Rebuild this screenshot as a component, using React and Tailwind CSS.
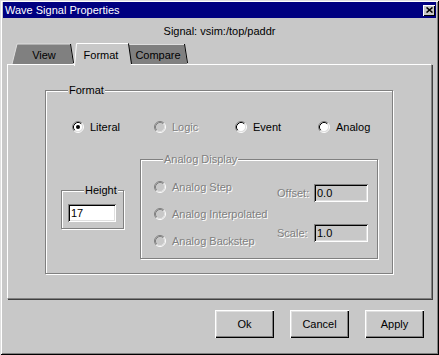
import React from 'react';

const font = { fontFamily: '"Liberation Sans", Arial, sans-serif' };

function Radio({ checked, disabled }) {
  return (
    <svg width="12" height="12" viewBox="0 0 12 12" className="shrink-0">
      <circle cx="6" cy="6" r="4.5" fill={disabled ? '#c8c8c8' : '#ffffff'} />
      <path d="M2.11 9.89 A5.5 5.5 0 0 1 9.89 2.11" fill="none" stroke="#808080" strokeWidth="1" />
      <path d="M9.89 2.11 A5.5 5.5 0 0 1 2.11 9.89" fill="none" stroke="#ffffff" strokeWidth="1" />
      <path d="M2.82 9.18 A4.5 4.5 0 0 1 9.18 2.82" fill="none" stroke={disabled ? '#808080' : '#000000'} strokeWidth="1" />
      <path d="M9.18 2.82 A4.5 4.5 0 0 1 2.82 9.18" fill="none" stroke="#dfdfdf" strokeWidth="1" />
      {checked && <circle cx="6" cy="6" r="2" fill="#000000" />}
    </svg>
  );
}

function Option({ label, checked, disabled, className = '' }) {
  return (
    <div className={`flex items-center gap-[6px] h-[16px] ${className}`}>
      <Radio checked={checked} disabled={disabled} />
      <span className={disabled ? 'text-[#808080] [text-shadow:1px_1px_0_#ffffff]' : 'text-black'}>{label}</span>
    </div>
  );
}

function Field({ value, disabled, className = '' }) {
  return (
    <div
      className={`h-[18px] flex items-center pl-[3px] ${disabled ? 'bg-[#c8c8c8]' : 'bg-white'} shadow-[inset_1px_1px_0_#808080,inset_-1px_-1px_0_#ffffff,inset_2px_2px_0_#000000,inset_-2px_-2px_0_#dfdfdf] ${className}`}
    >
      {value}
    </div>
  );
}

function GroupBox({ label, disabled, className = '', children }) {
  return (
    <div className={`relative border border-[#808080] shadow-[1px_1px_0_#ffffff,inset_1px_1px_0_#ffffff] ${className}`}>
      <span
        className={`absolute top-[-8px] left-[22px] px-[1px] bg-[#c8c8c8] leading-[14px] ${
          disabled ? 'text-[#808080] [text-shadow:1px_1px_0_#ffffff]' : 'text-black'
        }`}
      >
        {label}
      </span>
      {children}
    </div>
  );
}

function Button({ children }) {
  return (
    <button className="w-[59px] h-[28px] bg-[#c8c8c8] text-black shadow-[inset_1px_1px_0_#ffffff,inset_-1px_-1px_0_#000000,inset_-2px_-2px_0_#808080,inset_2px_2px_0_#dfdfdf]">
      {children}
    </button>
  );
}

function TabStrip() {
  return (
    <div className="relative z-10 h-[21px] w-[184px] ml-[4px]">
      <svg width="184" height="23" viewBox="0 0 184 23" className="absolute top-0 left-0">
        <polygon points="10,1 63,1 66,21 5,21" fill="#808080" />
        <polyline points="5,21 10,1 63,1" fill="none" stroke="#dfdfdf" strokeWidth="1" />
        <line x1="63.5" y1="1" x2="66.5" y2="20" stroke="#000000" strokeWidth="1" />

        <polygon points="122,1 177,1 180,21 124,21" fill="#808080" />
        <line x1="122" y1="1.5" x2="177" y2="1.5" stroke="#dfdfdf" strokeWidth="1" />
        <line x1="177.5" y1="1" x2="180.5" y2="20" stroke="#000000" strokeWidth="1" />

        <polygon points="69,0 121,0 124,23 67,23" fill="#c8c8c8" />
        <polyline points="67.5,23 69.5,0.5 121,0.5" fill="none" stroke="#ffffff" strokeWidth="1" />
        <line x1="121.5" y1="0.5" x2="124.5" y2="21" stroke="#000000" strokeWidth="1" />
      </svg>
      <div className="relative flex h-full pl-[5px] pt-[3px] items-center">
        <span className="w-[64px] text-center">View</span>
        <span className="w-[50px] text-center">Format</span>
        <span className="w-[64px] text-center">Compare</span>
      </div>
    </div>
  );
}

export default function App() {
  return (
    <div
      style={font}
      className="w-[439px] h-[355px] bg-[#c8c8c8] text-[11px] leading-[14px] text-black flex flex-col pt-[2px] px-[3px] shadow-[inset_1px_1px_0_#dfdfdf,inset_-1px_-1px_0_#000000,inset_2px_2px_0_#ffffff,inset_-2px_-2px_0_#808080]"
    >
      {/* title bar */}
      <div className="h-[16px] bg-[#000080] flex items-center justify-between pl-[2px] pr-[1px]">
        <span className="text-white">Wave Signal Properties</span>
        <div className="w-[12px] h-[11px] bg-[#c8c8c8] flex items-center justify-center shadow-[inset_1px_1px_0_#ffffff,inset_-1px_-1px_0_#000000]">
          <svg width="7" height="6" viewBox="0 0 7 6">
            <path d="M0.5 0.5 L6.5 5.5 M6.5 0.5 L0.5 5.5" stroke="#000" strokeWidth="1.6" />
          </svg>
        </div>
      </div>

      <div className="mt-[6px] h-[14px] text-center">Signal: vsim:/top/paddr</div>

      <div className="mt-[5px]">
        <TabStrip />
      </div>

      {/* tab panel */}
      <div className="ml-[4px] w-[425px] h-[235px] border-l border-t border-white border-r border-b border-r-[#808080] border-b-[#808080] shadow-[1px_1px_0_#404040]">
        <GroupBox label="Format" className="ml-[37px] mt-[25px] w-[348px] h-[184px]">
          <div className="flex pl-[26px] pt-[28px]">
            <Option label="Literal" checked className="w-[82px]" />
            <Option label="Logic" disabled className="w-[81px]" />
            <Option label="Event" className="w-[83px]" />
            <Option label="Analog" />
          </div>
          <div className="flex items-start pl-[15px] mt-[24px]">
            <GroupBox label="Height" className="mt-[31px] w-[63px] h-[39px]">
              <Field value="17" className="ml-[6px] mt-[13px] w-[48px]" />
            </GroupBox>
            <GroupBox label="Analog Display" disabled className="ml-[16px] w-[238px] h-[100px]">
              <div className="flex">
                <div className="w-[136px] pl-[13px] pt-[19px] flex flex-col gap-[11px]">
                  <Option label="Analog Step" disabled />
                  <Option label="Analog Interpolated" disabled />
                  <Option label="Analog Backstep" disabled />
                </div>
                <div className="pt-[24px] flex flex-col gap-[22px]">
                  <div className="flex items-center">
                    <span className="w-[37px] text-[#808080] [text-shadow:1px_1px_0_#ffffff]">Offset:</span>
                    <Field value="0.0" disabled className="w-[54px]" />
                  </div>
                  <div className="flex items-center">
                    <span className="w-[37px] text-[#808080] [text-shadow:1px_1px_0_#ffffff]">Scale:</span>
                    <Field value="1.0" disabled className="w-[54px]" />
                  </div>
                </div>
              </div>
            </GroupBox>
          </div>
        </GroupBox>
      </div>

      <div className="mt-[11px] flex justify-end gap-[16px] mr-[12px]">
        <Button>Ok</Button>
        <Button>Cancel</Button>
        <Button>Apply</Button>
      </div>
    </div>
  );
}
